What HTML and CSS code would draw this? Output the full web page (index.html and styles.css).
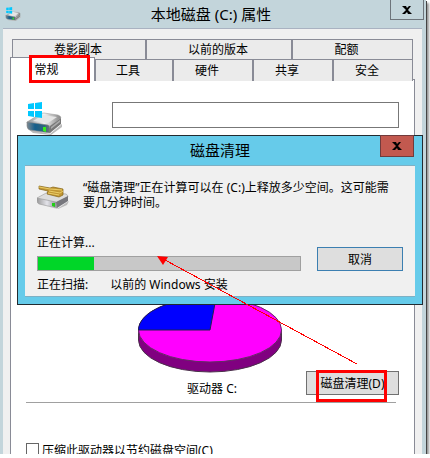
FILE: index.html
```html
<!DOCTYPE html>
<html lang="zh-CN">
<head>
<meta charset="utf-8">
<title>本地磁盘 (C:) 属性</title>
<link rel="stylesheet" href="styles.css">
</head>
<body>
<svg width="0" height="0" class="defs" aria-hidden="true">
  <defs>
    <linearGradient id="metal" x1="0" x2="1"><stop offset="0" stop-color="#8b8f93"/><stop offset=".5" stop-color="#f2f2f2"/><stop offset="1" stop-color="#858585"/></linearGradient>
    <linearGradient id="front" x1="0" x2="1"><stop offset="0" stop-color="#7d8890"/><stop offset=".35" stop-color="#155f8c"/><stop offset=".75" stop-color="#32637a"/><stop offset="1" stop-color="#777"/></linearGradient>
    <linearGradient id="silver" x1="0" x2="1"><stop offset="0" stop-color="#999"/><stop offset=".5" stop-color="#e4e4ea"/><stop offset="1" stop-color="#8b8b91"/></linearGradient>
    <symbol id="drive" viewBox="0 0 36 33">
      <path d="M2 27L24 32L36 22V25L25 33L7 31Z" fill="#bbb"/>
      <path d="M1 20L14 12Q16 11 18 11L32 13Q35 14 35 16L24 24L1 21Z" fill="url(#metal)" stroke="#999" stroke-width=".5"/>
      <path d="M7 19L17 13L31 15L22 21Z" fill="#e5e5e5"/>
      <path d="M1 20L22 23Q24 24 24 26V31L4 28Q1 27 1 24Z" fill="url(#front)" stroke="#888" stroke-width=".6"/>
      <path d="M24 24L35 16V22L24 31Z" fill="#777"/>
      <path d="M25 25L34 18V20L25 27Z" fill="#aaa"/>
      <path d="M17 25L20 25V30L17 29Z" fill="#35ed18"/>
      <path d="M2 2L8 1V7H2ZM9 1L16 0V7H9ZM2 9H8V15L2 14ZM9 9H16V16L9 15Z" fill="#00c8ff"/>
    </symbol>
  </defs>
</svg>
<main class="window">
  <header class="titlebar">
    <svg class="title-icon" aria-hidden="true"><use href="#drive"/></svg>
    <h1>本地磁盘 (C:) 属性</h1>
    <button class="close" aria-label="关闭"><svg viewBox="0 0 10 8"><path d="M0 0H4L5 2L7 0H9L6 4L10 8H6L5 6L3 8H0L4 4Z"/></svg></button>
  </header>
  <div class="client">
    <nav class="tabs" aria-label="属性页">
      <div class="tab-row back">
        <button>卷影副本</button><button>以前的版本</button><button>配额</button>
      </div>
      <div class="tab-row front">
        <button class="selected">常规</button><button>工具</button><button>硬件</button><button>共享</button><button>安全</button>
      </div>
    </nav>
    <section class="page">
      <div class="name-row">
        <svg class="drive-icon" aria-hidden="true"><use href="#drive"/></svg>
        <input type="text" aria-label="卷标">
      </div>
      <div class="usage">
        <figure>
          <svg class="pie" viewBox="0 0 144 76" aria-hidden="true">
            <path d="M.5 33V43A71.5 32 0 0 0 143.5 43V33Z" fill="#800080" stroke="#4b304b"/>
            <ellipse cx="72" cy="33" rx="71.5" ry="32" fill="#f0f" stroke="#603060"/>
            <path d="M72 33H.5A71.5 32 0 0 1 78 1Z" fill="#00f" stroke="#202050"/>
          </svg>
          <figcaption>驱动器 C:</figcaption>
        </figure>
        <button class="button cleanup">磁盘清理(D)</button>
      </div>
      <hr>
      <label class="option"><input type="checkbox">压缩此驱动器以节约磁盘空间(C)</label>
    </section>
  </div>
  <section class="dialog" role="dialog" aria-labelledby="dialog-title">
    <header class="dialog-title">
      <h2 id="dialog-title">磁盘清理</h2>
      <button class="close danger" aria-label="关闭"><svg viewBox="0 0 10 8"><path d="M0 0H4L5 2L7 0H9L6 4L10 8H6L5 6L3 8H0L4 4Z"/></svg></button>
    </header>
    <div class="dialog-body">
      <div class="message">
        <svg viewBox="0 0 32 24" aria-hidden="true">
          <path d="M3 19L20 24L32 16L30 20L21 24Z" fill="#bbb"/>
          <path d="M0 13L11 7L29 9Q31 10 31 12L20 18L0 14Z" fill="#ddd" stroke="#999" stroke-width=".6"/>
          <path d="M0 13L19 17L20 23L2 19Q0 18 0 16Z" fill="url(#silver)" stroke="#999" stroke-width=".6"/>
          <path d="M19 17L31 11V16L20 23Z" fill="#77777d"/>
          <path d="M15 18L18 18V22L15 21Z" fill="#22ce16"/>
          <path d="M2 1L13 3L16 2L26 4V10L22 12L10 9L11 6L2 4Z" fill="#c19634" stroke="#856414" stroke-width=".7"/>
          <path d="M2 2L13 4L25 5M12 6L23 8L26 6M11 8L22 10" fill="none" stroke="#ebce68" stroke-width="1"/>
        </svg>
        <p>“磁盘清理”正在计算可以在 (C:)上释放多少空间。这可能需要几分钟时间。</p>
      </div>
      <div class="work">
        <div class="status">
          <span id="progress-label">正在计算...</span>
          <div class="progress" role="progressbar" aria-labelledby="progress-label" aria-valuenow="21"><div class="bar" style="width:21.5%"></div></div>
        </div>
        <button class="button cancel">取消</button>
      </div>
      <p class="scan"><span>正在扫描:</span><span>以前的 Windows 安装</span></p>
    </div>
  </section>
  <div class="mark tab-mark"></div>
  <svg class="arrow" viewBox="0 0 201 109" aria-hidden="true">
    <path d="M8 4L200 108" stroke="#f00" fill="none" shape-rendering="crispEdges"/>
    <path d="M0 0L11 1L6 9Z" fill="#f00"/>
  </svg>
</main>
</body>
</html>
```
FILE: styles.css
```css
*, *::after { box-sizing: border-box; }
body {
  margin: 0;
  background: #fff;
  color: #000;
  font: 12px/15px "Noto Sans", "Noto Sans CJK SC", sans-serif;
  overflow: hidden;
}
button, input { font: inherit; color: inherit; margin: 0; border-radius: 0; }
button { padding: 0; }
h1, h2, p, figure { margin: 0; font-weight: 400; }
.defs { position: absolute; }
.window {
  position: relative;
  height: calc(100vh - 4px);
  margin-right: 4px;
  background: #c3d5db;
  box-shadow: 1px 1px 0 #444, 3px 3px 2px #999;
}
.titlebar {
  display: grid;
  grid-template-columns: 32px 1fr 36px;
  height: 28px;
}
.title-icon { width: 16px; height: 14px; margin: 7px 0 0 5px; }
h1, h2 { font-size: 15px; line-height: 28px; text-align: center; }
.close {
  width: 34px;
  height: 20px;
  border: 1px solid #6d747b;
  border-top: 0;
  background: transparent;
}
.close svg { display: block; width: 10px; height: 8px; margin: auto; }
.client {
  height: calc(100% - 28px);
  margin: 0 4px 0 3px;
  padding: 10px 7px 0;
  border-top: 1px solid #a9b2c1;
  background: #f0f0f0;
  overflow: hidden;
}
.tabs { padding: 0 2px; }
.tab-row { display: grid; height: 20px; }
.tab-row button {
  padding-right: 12px;
  border: 1px solid #898b96;
  border-bottom: 0;
  background: #ebebeb;
}
.back { grid-template-columns: 134fr 146fr 121fr; }
.back button:not(:last-child) { padding-right: 2px; }
.front { grid-template-columns: 83fr 78fr 80fr 80fr 80fr; }
.tab-row .selected {
  position: relative;
  height: 24px;
  margin: -2px 0 0 -2px;
  background: #fff;
}
.page {
  min-height: 400px;
  padding: 22px 15px 0;
  border: 1px solid #898b96;
  background: #fff;
}
.name-row { display: flex; gap: 50px; align-items: start; }
.drive-icon { width: 36px; height: 33px; }
.name-row input {
  flex: 1;
  min-width: 0;
  height: 26px;
  border: 1px solid #777;
  background: #fff;
}
.usage {
  display: grid;
  grid-template-columns: 112px 144px 1fr;
  align-items: end;
  margin-top: 162px;
}
figure { grid-column: 2; text-align: center; }
.pie { display: block; width: 144px; height: 76px; }
figcaption { padding: 8px 0 0 4px; }
.button { height: 24px; border: 1px solid #707070; background: #dedede; }
.cleanup { position: relative; width: 93px; justify-self: end; margin-bottom: 1px; }
.cleanup::after {
  content: "";
  position: absolute;
  top: -2px;
  left: 9px;
  width: 71px;
  height: 32px;
  border: 3px solid #f00;
}
hr { height: 1px; margin: 6px 3px 40px 0; border: 0; background: #a0a0a0; }
.option { display: flex; align-items: start; gap: 3px; }
.option input {
  appearance: none;
  width: 13px;
  height: 13px;
  border: 1px solid #666;
  background: #fff;
}
.dialog {
  position: absolute;
  top: 135px;
  left: 17px;
  right: 3px;
  border: 1px solid #222b30;
  padding: 0 7px 7px;
  background: #66cbea;
}
.dialog-title {
  display: grid;
  grid-template-columns: 34px 1fr 34px;
  height: 29px;
}
.dialog-title h2 { grid-column: 2; }
.danger {
  height: 22px;
  margin: -1px 0 0 -1px;
  border: 1px solid #713b3c;
  background: #c2594f;
}
.dialog-body {
  padding: 14px 12px 4px;
  border: solid #7eb0c4;
  border-width: 1px 0;
  background: #f0f0f0;
}
.message { display: flex; gap: 14px; align-items: start; padding-right: 8px; }
.message svg { flex: none; width: 32px; height: 24px; margin-top: 5px; }
.message p { flex: 1; }
.work { display: flex; gap: 16px; align-items: end; margin-top: 25px; }
.status { flex: 1; }
.progress { height: 15px; margin-top: 6px; border: 1px solid #a0a0a0; background: #c8c8c8; }
.bar { height: 100%; background: #00d628; }
.cancel { width: 86px; border-color: #3c7fb1; }
.scan { display: flex; gap: 22px; margin-top: 6px; }
.mark { position: absolute; border: 3px solid #f00; }
.tab-mark { top: 55px; left: 29px; width: 61px; height: 28px; }
.arrow { position: absolute; top: 256px; left: 157px; width: 201px; height: 109px; pointer-events: none; }
```
